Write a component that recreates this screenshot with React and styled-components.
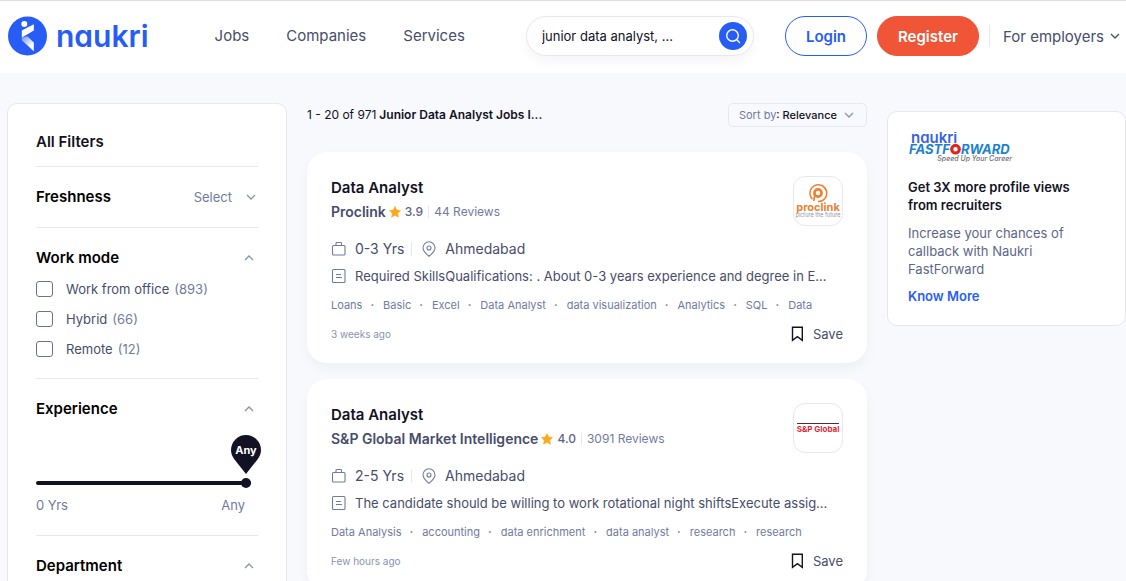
import React, { useState } from 'react'
import styled, { createGlobalStyle } from 'styled-components'

const GlobalStyle = createGlobalStyle`
    *, *::before, *::after {
        box-sizing: border-box;
    }
    body {
        margin: 0;
        background: #f8f9fc;
        color: #121224;
        font-family: Inter, "Liberation Sans", sans-serif;
        font-size: 14px;
    }
    h1, h2, h3, p, ul {
        margin: 0;
        padding: 0;
    }
    button, input, select {
        font-family: inherit;
    }
`

const Header = styled.header`
    display: flex;
    align-items: center;
    height: 73px;
    padding: 0 6px 2px 8px;
    background: #fff;
    border-top: 1px solid #dedfe3;
`

const Brand = styled.a`
    display: flex;
    align-items: center;
    gap: 9px;
    color: #275df5;
    text-decoration: none;
`

const BrandName = styled.span`
    font-size: 30px;
    font-weight: 600;
    line-height: 40px;
    font-feature-settings: "cv11";
`

const Nav = styled.nav`
    display: flex;
    gap: 37px;
    margin-left: 66px;
`

const NavLink = styled.a`
    color: #474d6a;
    font-size: 15px;
    line-height: 24px;
    text-decoration: none;
`

const SearchBox = styled.form`
    display: flex;
    align-items: center;
    width: 228px;
    height: 40px;
    margin-left: auto;
    padding: 0 6px 0 15px;
    border: 1px solid #e7e7f1;
    border-radius: 20px;
    background: #fff;
    box-shadow: 0 6px 12px rgba(30, 10, 58, 0.04);
`

const SearchInput = styled.input`
    flex: 1;
    min-width: 0;
    padding: 0;
    border: 0;
    outline: 0;
    background: transparent;
    color: #121224;
    font-size: 13px;
`

const SearchButton = styled.button`
    display: flex;
    align-items: center;
    justify-content: center;
    width: 28px;
    height: 28px;
    padding: 0;
    border: 0;
    border-radius: 50%;
    background: #275df5;
`

const Actions = styled.div`
    display: flex;
    align-items: center;
    gap: 10px;
    margin-left: 31px;
`

const PillButton = styled.button`
    height: 40px;
    padding: 0 20px;
    border: 1px solid ${props => props.$solid ? '#f05537' : '#275df5'};
    border-radius: 20px;
    background: ${props => props.$solid ? '#f05537' : '#fff'};
    color: ${props => props.$solid ? '#fff' : '#275df5'};
    font-size: 15px;
    font-weight: 600;
`

const Employers = styled.a`
    display: flex;
    align-items: center;
    gap: 6px;
    height: 22px;
    padding-left: 13px;
    border-left: 1px solid #e7e7f1;
    color: #474d6a;
    font-size: 15px;
    text-decoration: none;
`

const Page = styled.main`
    display: grid;
    grid-template-columns: 280px minmax(0, 1fr) 239px;
    gap: 20px;
    padding: 30px 0 0 7px;
`

const Sidebar = styled.aside`
    padding: 26px 28px;
    border: 1px solid #e7e7f1;
    border-radius: 10px;
    background: #fff;
`

const SidebarTitle = styled.h2`
    padding-bottom: 12px;
    border-bottom: 1px solid #e7e7f1;
    font-size: 15px;
    font-weight: 600;
    line-height: 24px;
`

const Section = styled.section`
    padding: 18px 0;
    border-bottom: 1px solid #e7e7f1;
`

const SectionHead = styled.div`
    display: flex;
    align-items: center;
    justify-content: space-between;
`

const SectionTitle = styled.h3`
    color: #000;
    font-size: 15px;
    font-weight: 600;
    line-height: 24px;
`

const ToggleButton = styled.button`
    display: flex;
    align-items: center;
    gap: 14px;
    padding: 0 ${props => props.$wide ? '2px' : '4px'} 0 0;
    border: 0;
    background: transparent;
    color: #717b9e;
    font-size: 13px;
`

const OptionList = styled.ul`
    display: flex;
    flex-direction: column;
    gap: 8px;
    margin-top: 8px;
    list-style: none;
`

const OptionLabel = styled.label`
    display: flex;
    align-items: center;
    gap: 12px;
    color: #474d6a;
    font-size: 13px;
    line-height: 22px;
`

const CheckBox = styled.input`
    appearance: none;
    width: 17px;
    height: 16px;
    margin: 0 1px 0 0;
    border: 1px solid #6b7090;
    border-radius: 3px;
    background: ${props => props.checked ? '#121224' : '#fff'};
`

const Count = styled.span`
    margin-left: 5px;
    color: #717b9e;
`

const SliderArea = styled.div`
    position: relative;
    padding-top: 52px;
`

const Slider = styled.input`
    display: block;
    appearance: none;
    width: calc(100% - 7px);
    height: 20px;
    margin: 0;
    background: transparent;

    &::-webkit-slider-runnable-track {
        height: 4px;
        border-radius: 2px;
        background: #121224;
    }
    &::-webkit-slider-thumb {
        appearance: none;
        width: 10px;
        height: 10px;
        margin-top: -3px;
        border-radius: 50%;
        background: #121224;
    }
`

const SliderPin = styled.output`
    position: absolute;
    top: 14px;
    right: -3px;
    width: 30px;
    height: 39px;
    color: #fff;
    font-size: 11px;
    font-weight: 700;
    line-height: 30px;
    text-align: center;

    svg {
        position: absolute;
        inset: 0;
    }
    span {
        position: relative;
    }
`

const SliderEnds = styled.div`
    display: flex;
    justify-content: space-between;
    padding-right: 13px;
    color: #717b9e;
    font-size: 13px;
    line-height: 24px;
`

const Results = styled.section`
    display: flex;
    flex-direction: column;
    gap: 16px;
`

const ResultsBar = styled.div`
    display: flex;
    align-items: center;
    justify-content: space-between;
    height: 24px;
    margin-bottom: 9px;
`

const ResultsTitle = styled.h1`
    font-size: 12px;
    font-weight: 600;
    line-height: 18px;

    span {
        font-weight: 400;
    }
`

const SortButton = styled.button`
    display: flex;
    align-items: center;
    gap: 7px;
    height: 24px;
    padding: 0 12px 0 10px;
    border: 1px solid #e7e7f1;
    border-radius: 5px;
    background: transparent;
    color: #121224;
    font-size: 11px;
    font-weight: 500;
`

const Muted = styled.span`
    color: #717b9e;
    font-weight: 400;
`

const JobCard = styled.article`
    padding: 24px 24px 18px;
    border-radius: 20px;
    background: #fff;
    box-shadow: 0 6px 12px rgba(30, 10, 58, 0.04);
`

const JobHead = styled.div`
    display: flex;
    justify-content: space-between;
    margin-bottom: 12px;
`

const JobTitle = styled.h2`
    font-size: 15px;
    font-weight: 600;
    line-height: 24px;
`

const CompanyRow = styled.div`
    display: flex;
    align-items: center;
    color: #717b9e;
    font-size: 12px;
    line-height: 24px;
`

const Company = styled.a`
    margin-right: 3px;
    color: #474d6a;
    font-size: 14px;
    font-weight: 600;
    text-decoration: none;
`

const Rating = styled.span`
    margin-left: 4px;
    color: #5d6687;
    font-weight: 500;
`

const Reviews = styled.a`
    margin-left: 5px;
    padding-left: 5px;
    border-left: 1px solid #e7e7f1;
    color: #717b9e;
    line-height: 12px;
    text-decoration: none;
`

const CompanyLogo = styled.div`
    flex: none;
    width: 50px;
    height: 50px;
    overflow: hidden;
    border: 1px solid #e7e7f1;
    border-radius: 12px;

    svg {
        display: block;
    }
`

const MetaRow = styled.div`
    display: flex;
    align-items: center;
    margin-bottom: 5px;
    color: #474d6a;
    line-height: 22px;
`

const MetaItem = styled.span`
    display: flex;
    align-items: center;
    gap: 8px;

    & + & {
        height: 14px;
        margin-left: 7px;
        padding-left: 9px;
        border-left: 1px solid #e7e7f1;
        line-height: 14px;
    }
`

const Desc = styled.p`
    display: flex;
    align-items: center;
    gap: 8px;
    margin-bottom: 9px;
    color: #474d6a;
    font-size: 13px;
    line-height: 22px;

    svg {
        flex: none;
    }
    span {
        overflow: hidden;
        text-overflow: ellipsis;
        white-space: nowrap;
    }
`

const TagList = styled.ul`
    display: flex;
    margin-bottom: 9px;
    color: #717b9e;
    font-size: 11px;
    line-height: 18px;
    list-style: none;
    white-space: nowrap;
`

const Tag = styled.li`
    &:not(:last-child)::after {
        content: "·";
        margin: 0 9px 0 8px;
        font-weight: 700;
    }
`

const JobFoot = styled.div`
    display: flex;
    align-items: center;
    justify-content: space-between;
    color: #8b92b0;
    font-size: 10px;
    line-height: 22px;
`

const SaveButton = styled.button`
    display: flex;
    align-items: center;
    gap: 9px;
    padding: 0;
    border: 0;
    background: transparent;
    color: #474d6a;
    font-size: 13px;
    line-height: 22px;
`

const Promo = styled.aside`
    align-self: start;
    margin-top: 8px;
    padding: 20px;
    border: 1px solid #e7e7f1;
    border-radius: 10px;
    background: #fff;

    svg {
        display: block;
        margin-bottom: 16px;
    }
`

const PromoTitle = styled.h2`
    max-width: 180px;
    margin-bottom: 10px;
    font-size: 13px;
    font-weight: 600;
    line-height: 18px;
`

const PromoText = styled.p`
    max-width: 170px;
    margin-bottom: 9px;
    color: #5d6687;
    font-size: 13px;
    line-height: 18px;
`

const PromoLink = styled.a`
    display: block;
    color: #275df5;
    font-size: 13px;
    font-weight: 600;
    line-height: 18px;
    text-decoration: none;
`

const Chevron = ({ up, size = 10, color = '#8b92b0' }) => (
    <svg width={size} height={size} viewBox="0 0 10 10" fill="none" stroke={color} strokeWidth="1.3">
        <path d={up ? 'M1 7l4-4 4 4' : 'M1 3l4 4 4-4'} />
    </svg>
)

const BrandMark = () => (
    <svg width="39" height="40" viewBox="0 0 39 40">
        <defs>
            <linearGradient id="fold" x1="0" y1="0" x2="0.8" y2="1">
                <stop offset="0" stopColor="#fff" stopOpacity="0.35" />
                <stop offset="0.8" stopColor="#fff" />
            </linearGradient>
        </defs>
        <circle cx="19.5" cy="20" r="19.5" fill="#275df5" />
        <circle cx="16.3" cy="8" r="3" fill="#fff" />
        <path d="M25.800 8.300V14.500L19.500 18.300 13.800 21.500V14.600z" fill="#fff" />
        <path d="M13.800 21.500L19.300 20.300 25.800 26.600V35.300L13.800 24.300z" fill="url(#fold)" />
    </svg>
)

const SearchIcon = () => (
    <svg width="16" height="16" viewBox="0 0 16 16" fill="none" stroke="#fff" strokeWidth="1.4" strokeLinecap="round">
        <circle cx="7.5" cy="7.5" r="5.8" />
        <path d="M11.8 11.8l2.7 2.7" />
    </svg>
)

const StarIcon = () => (
    <svg width="12" height="12" viewBox="0 0 12 12" fill="#fea81e">
        <path d="M6 .6l1.7 3.5 3.8.5-2.8 2.7.7 3.9L6 9.3l-3.4 1.9.7-3.9L.5 4.6l3.8-.5z" stroke="#fea81e" strokeWidth=".6" strokeLinejoin="round" />
    </svg>
)

const BagIcon = () => (
    <svg width="16" height="16" viewBox="0 0 16 16" fill="none" stroke="#717b9e" strokeWidth="1.1">
        <rect x="1.5" y="4.5" width="12.5" height="9.5" rx="1" />
        <path d="M5 4.5V2.3c0-.5.3-.8.8-.8h4c.4 0 .7.3.7.8v2.2" />
    </svg>
)

const PinIcon = () => (
    <svg width="16" height="16" viewBox="0 0 16 16" fill="none" stroke="#717b9e" strokeWidth="1.1">
        <path d="M14 7c0 3.300-2.800 5.700-6 8.200C4.800 12.700 2 10.300 2 7a6 6.200 0 0 1 12 0z" />
        <circle cx="8" cy="7" r="2" />
    </svg>
)

const NoteIcon = () => (
    <svg width="16" height="16" viewBox="0 0 16 16" fill="none" stroke="#717b9e" strokeWidth="1.1">
        <rect x="1.5" y="1.5" width="12.5" height="13" rx="1" />
        <path d="M5 6.5h5M5 9.5h6" />
    </svg>
)

const BookmarkIcon = () => (
    <svg width="13" height="16" viewBox="0 0 13 16" fill="none" stroke="#121224" strokeWidth="1.4">
        <path d="M1.5 1.2h9.8v13.2l-4.9-3.7-4.9 3.7z" />
    </svg>
)

const ProclinkLogo = () => (
    <svg width="48" height="48" viewBox="0 0 48 48">
        <g fill="none" stroke="#ee8133">
            <path d="M18.600 22.300a8.400 8.400 0 1 1 5.400 2.300" strokeWidth="1.500" />
            <circle cx="24" cy="16" r="3.600" strokeWidth="2.700" />
            <path d="M20.800 17.500L19.800 24" strokeWidth="1.700" />
        </g>
        <text x="24" y="34" textAnchor="middle" fontFamily="Inter, sans-serif" fontSize="11" fontWeight="700" fill="#ee8133">proclink</text>
        <text x="24" y="40" textAnchor="middle" fontFamily="Inter, sans-serif" fontSize="5.5" fill="#8d93a6">picture the future</text>
    </svg>
)

const SpGlobalLogo = () => (
    <svg width="48" height="48" viewBox="0 0 48 48">
        <path d="M3 19.5h42" stroke="#4a3034" strokeWidth="1" />
        <text x="24" y="28" textAnchor="middle" fontFamily="Inter, sans-serif" fontSize="8" fontWeight="700" fill="#e2253b">S&amp;P Global</text>
    </svg>
)

const Wordmark = styled.text`
    font-size: 15px;
    font-weight: 600;
    font-feature-settings: "cv11";
`

const FastForwardLogo = () => (
    <svg width="106" height="30" viewBox="0 0 106 30" fontFamily="Inter, sans-serif">
        <Wordmark x="3" y="11" fill="#3a61e8">naukri</Wordmark>
        <g fontSize="13" fontWeight="700" fontStyle="italic" fill="#1c82cf">
            <text x="1" y="22">FASTF</text>
            <text x="53" y="22">RWARD</text>
        </g>
        <circle cx="47.5" cy="17.200" r="3.800" fill="#fff" stroke="#e2231f" strokeWidth="3.200" />
        <text x="104" y="29" textAnchor="end" fontSize="7" fontWeight="500" fontStyle="italic" fill="#6d6e73">Speed Up Your Career</text>
    </svg>
)

const navItems = ['Jobs', 'Companies', 'Services']

const workModes = [
    { name: 'Work from office', count: 893 },
    { name: 'Hybrid', count: 66 },
    { name: 'Remote', count: 12 },
]

const jobs = [
    {
        title: 'Data Analyst',
        company: 'Proclink',
        rating: '3.9',
        reviews: 44,
        exp: '0-3 Yrs',
        place: 'Ahmedabad',
        desc: 'Required SkillsQualifications: . About 0-3 years experience and degree in E...',
        tags: ['Loans', 'Basic', 'Excel', 'Data Analyst', 'data visualization', 'Analytics', 'SQL', 'Data'],
        posted: '3 weeks ago',
        Logo: ProclinkLogo,
    },
    {
        title: 'Data Analyst',
        company: 'S&P Global Market Intelligence',
        rating: '4.0',
        reviews: 3091,
        exp: '2-5 Yrs',
        place: 'Ahmedabad',
        desc: 'The candidate should be willing to work rotational night shiftsExecute assig...',
        tags: ['Data Analysis', 'accounting', 'data enrichment', 'data analyst', 'research', 'research'],
        posted: 'Few hours ago',
        Logo: SpGlobalLogo,
    },
]

const FilterSection = ({ title, children }) => (
    <Section>
        <SectionHead>
            <SectionTitle>{title}</SectionTitle>
            <ToggleButton type="button" aria-label={title}><Chevron up /></ToggleButton>
        </SectionHead>
        {children}
    </Section>
)

const Job = ({ job }) => (
    <JobCard>
        <JobHead>
            <div>
                <JobTitle>{job.title}</JobTitle>
                <CompanyRow>
                    <Company href="#">{job.company}</Company>
                    <StarIcon />
                    <Rating>{job.rating}</Rating>
                    <Reviews href="#">{job.reviews} Reviews</Reviews>
                </CompanyRow>
            </div>
            <CompanyLogo><job.Logo /></CompanyLogo>
        </JobHead>
        <MetaRow>
            <MetaItem><BagIcon />{job.exp}</MetaItem>
            <MetaItem><PinIcon />{job.place}</MetaItem>
        </MetaRow>
        <Desc><NoteIcon /><span>{job.desc}</span></Desc>
        <TagList>
            {job.tags.map((tag, i) => <Tag key={i}>{tag}</Tag>)}
        </TagList>
        <JobFoot>
            {job.posted}
            <SaveButton type="button"><BookmarkIcon />Save</SaveButton>
        </JobFoot>
    </JobCard>
)

const App = () => {
    const [query, setQuery] = useState('junior data analyst, ...')
    const [modes, setModes] = useState({})
    const [years, setYears] = useState(30)

    const toggleMode = name => setModes({ ...modes, [name]: !modes[name] })

    return (
        <>
            <GlobalStyle />
            <Header>
                <Brand href="#">
                    <BrandMark />
                    <BrandName>naukri</BrandName>
                </Brand>
                <Nav>
                    {navItems.map(item => <NavLink key={item} href="#">{item}</NavLink>)}
                </Nav>
                <SearchBox onSubmit={e => e.preventDefault()}>
                    <SearchInput aria-label="Search jobs" value={query} onChange={e => setQuery(e.target.value)} />
                    <SearchButton type="submit" aria-label="Search"><SearchIcon /></SearchButton>
                </SearchBox>
                <Actions>
                    <PillButton type="button">Login</PillButton>
                    <PillButton type="button" $solid>Register</PillButton>
                    <Employers href="#">For employers <Chevron color="#474d6a" /></Employers>
                </Actions>
            </Header>
            <Page>
                <Sidebar>
                    <SidebarTitle>All Filters</SidebarTitle>
                    <Section>
                        <SectionHead>
                            <SectionTitle>Freshness</SectionTitle>
                            <ToggleButton type="button" $wide>Select <Chevron /></ToggleButton>
                        </SectionHead>
                    </Section>
                    <FilterSection title="Work mode">
                        <OptionList>
                            {workModes.map(mode => (
                                <li key={mode.name}>
                                    <OptionLabel>
                                        <CheckBox
                                            type="checkbox"
                                            checked={!!modes[mode.name]}
                                            onChange={() => toggleMode(mode.name)}
                                        />
                                        <span>{mode.name}<Count>({mode.count})</Count></span>
                                    </OptionLabel>
                                </li>
                            ))}
                        </OptionList>
                    </FilterSection>
                    <FilterSection title="Experience">
                        <SliderArea>
                            <SliderPin>
                                <svg width="30" height="39" viewBox="0 0 30 39" fill="#121224">
                                    <path d="M15 0a15 15 0 0 1 15 15c0 3.8-1.5 7-3.7 9.7L15 39 3.7 24.7C1.5 22 0 18.8 0 15A15 15 0 0 1 15 0z" />
                                </svg>
                                <span>{years === 30 ? 'Any' : years}</span>
                            </SliderPin>
                            <Slider
                                type="range"
                                min="0"
                                max="30"
                                aria-label="Experience"
                                value={years}
                                onChange={e => setYears(Number(e.target.value))}
                            />
                            <SliderEnds><span>0 Yrs</span><span>Any</span></SliderEnds>
                        </SliderArea>
                    </FilterSection>
                    <FilterSection title="Department" />
                </Sidebar>
                <Results>
                    <ResultsBar>
                        <ResultsTitle><span>1 - 20 of 971</span> Junior Data Analyst Jobs I...</ResultsTitle>
                        <SortButton type="button">
                            <span><Muted>Sort by</Muted>: Relevance</span>
                            <Chevron />
                        </SortButton>
                    </ResultsBar>
                    {jobs.map(job => <Job key={job.company} job={job} />)}
                </Results>
                <Promo>
                    <FastForwardLogo />
                    <PromoTitle>Get 3X more profile views from recruiters</PromoTitle>
                    <PromoText>Increase your chances of callback with Naukri FastForward</PromoText>
                    <PromoLink href="#">Know More</PromoLink>
                </Promo>
            </Page>
        </>
    )
}

export default App
